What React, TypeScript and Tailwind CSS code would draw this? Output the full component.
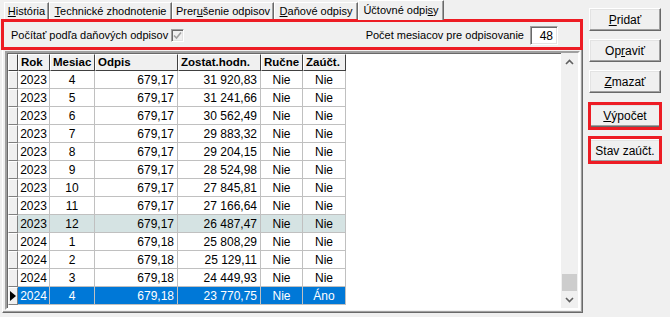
import React from "react";

const rows: string[][] = [
  ["2023", "4", "679,17", "31 920,83", "Nie", "Nie"],
  ["2023", "5", "679,17", "31 241,66", "Nie", "Nie"],
  ["2023", "6", "679,17", "30 562,49", "Nie", "Nie"],
  ["2023", "7", "679,17", "29 883,32", "Nie", "Nie"],
  ["2023", "8", "679,17", "29 204,15", "Nie", "Nie"],
  ["2023", "9", "679,17", "28 524,98", "Nie", "Nie"],
  ["2023", "10", "679,17", "27 845,81", "Nie", "Nie"],
  ["2023", "11", "679,17", "27 166,64", "Nie", "Nie"],
  ["2023", "12", "679,17", "26 487,47", "Nie", "Nie"],
  ["2024", "1", "679,18", "25 808,29", "Nie", "Nie"],
  ["2024", "2", "679,18", "25 129,11", "Nie", "Nie"],
  ["2024", "3", "679,18", "24 449,93", "Nie", "Nie"],
  ["2024", "4", "679,18", "23 770,75", "Nie", "Áno"],
];

const cols = [
  { title: "Rok", w: "w-[32px]", align: "justify-center" },
  { title: "Mesiac", w: "w-[45px]", align: "justify-center" },
  { title: "Odpis", w: "w-[83px]", align: "justify-end pr-[3px]" },
  { title: "Zostat.hodn.", w: "w-[83px]", align: "justify-end pr-[3px]" },
  { title: "Ručne", w: "w-[42px]", align: "justify-center" },
  { title: "Zaúčt.", w: "w-[43px]", align: "justify-center" },
];

function Tab({ w, active, children }: { w: string; active?: boolean; children: React.ReactNode }) {
  if (active) {
    return (
      <div
        className={`${w} h-[20px] -mb-[1px] relative z-10 bg-[#f0f0f0] border-l border-t border-white border-r border-r-[#696969] shadow-[inset_-1px_0_#a0a0a0] flex items-center justify-center pb-[1px]`}
      >
        {children}
      </div>
    );
  }
  return (
    <div
      className={`${w} h-[17px] bg-[#f0f0f0] border-l border-t border-white border-r border-r-[#696969] shadow-[inset_-1px_0_#a0a0a0] flex items-center justify-center pt-[1px]`}
    >
      {children}
    </div>
  );
}

function Button({ mt, children }: { mt: string; children: React.ReactNode }) {
  return (
    <div
      className={`${mt} w-[72px] h-[23px] bg-[#f0f0f0] border border-t-white border-l-white border-r-[#696969] border-b-[#696969] shadow-[inset_-1px_-1px_#a0a0a0,inset_1px_1px_#e3e3e3] flex items-center justify-center text-[12px]`}
    >
      {children}
    </div>
  );
}

function Chevron({ down }: { down?: boolean }) {
  return (
    <svg width="9" height="6" viewBox="0 0 9 6">
      <path
        d={down ? "M1 1 L4.5 4.5 L8 1" : "M1 5 L4.5 1.5 L8 5"}
        fill="none"
        stroke="#606060"
        strokeWidth="1.6"
      />
    </svg>
  );
}

export default function App() {
  return (
    <div className="w-[670px] h-[317px] bg-[#f0f0f0] relative flex overflow-hidden whitespace-nowrap text-black text-[11px] leading-none font-['Liberation_Sans',Arial,sans-serif]">
      {/* left: tab control */}
      <div className="w-[584px] pl-[2px] flex flex-col">
        <div className="h-[19px] flex items-end pl-[2px]">
          <Tab w="w-[45px]">
            <span>
              <u>H</u>istória
            </span>
          </Tab>
          <Tab w="w-[123px]">
            <span>
              <u>T</u>echnické zhodnotenie
            </span>
          </Tab>
          <Tab w="w-[102px]">
            <span>
              Prer<u>u</u>šenie odpisov
            </span>
          </Tab>
          <Tab w="w-[84px]">
            <span>
              <u>D</u>aňové odpisy
            </span>
          </Tab>
          <Tab w="w-[86px]" active>
            <span>
              Účtovné odpi<u>s</u>y
            </span>
          </Tab>
        </div>

        <div className="w-[581px] h-[294px] border-l border-t border-white border-r border-b border-r-[#696969] border-b-[#696969] shadow-[inset_-1px_-1px_#a0a0a0] flex flex-col">
          {/* header options */}
          <div className="h-[31px] flex items-center pl-[8px] pr-[24px]">
            <span>Počítať podľa daňových odpisov</span>
            <div className="ml-[3px] w-[13px] h-[13px] border border-t-[#a0a0a0] border-l-[#a0a0a0] border-r-white border-b-white bg-[#f0f0f0] shadow-[inset_1px_1px_#696969,inset_-1px_-1px_#e3e3e3] flex items-center justify-center">
              <svg width="9" height="9" viewBox="0 0 9 9">
                <path d="M1 4.5 L3.5 7 L8 1.5" fill="none" stroke="#a0a0a0" strokeWidth="1.6" />
              </svg>
            </div>
            <div className="flex-1" />
            <span>Počet mesiacov pre odpisovanie</span>
            <div className="ml-[6px] w-[28px] h-[19px] bg-white border border-t-[#a0a0a0] border-l-[#a0a0a0] border-r-white border-b-white shadow-[inset_1px_1px_#696969,inset_-1px_-1px_#e3e3e3] flex items-center justify-end pr-[4px] text-[12px]">
              48
            </div>
          </div>

          {/* grid */}
          <div className="ml-[2px] w-[575px] h-[259px] border-2 border-t-[#a0a0a0] border-l-[#a0a0a0] border-r-white border-b-white flex bg-white">
            <div className="flex-1 flex flex-col border-t border-l border-[#696969]">
              {/* header row */}
              <div className="flex h-[17px]">
                <div className="w-[10px] h-full bg-[#f0f0f0] border-t border-l border-white border-r border-b border-r-[#404040] border-b-[#404040]" />
                {cols.map((c) => (
                  <div
                    key={c.title}
                    className={`${c.w} h-full bg-[#f0f0f0] border-t border-l border-white border-r border-b border-r-[#404040] border-b-[#404040] flex items-center pl-[2px] font-bold text-[11.5px] overflow-hidden`}
                  >
                    {c.title}
                  </div>
                ))}
              </div>
              {rows.map((r, i) => {
                const sel = i === rows.length - 1;
                const hl = i === 8;
                const bg = sel ? "bg-[#0078d7] text-white" : hl ? "bg-[#d5e3e3]" : "bg-white";
                return (
                  <div key={i} className="flex h-[18px]">
                    <div className="w-[10px] h-full bg-[#f0f0f0] border-t border-l border-white border-r border-b border-r-[#808080] border-b-[#808080] flex items-center justify-center">
                      {sel && (
                        <svg width="6" height="10" viewBox="0 0 6 10">
                          <path d="M0 0 L6 5 L0 10 Z" fill="#000" />
                        </svg>
                      )}
                    </div>
                    {r.map((v, j) => (
                      <div
                        key={j}
                        className={`${cols[j].w} h-full ${bg} border-r border-b border-[#c0c0c0] flex items-center ${cols[j].align} text-[12px]`}
                      >
                        {v}
                      </div>
                    ))}
                  </div>
                );
              })}
            </div>
            {/* scrollbar */}
            <div className="w-[17px] h-full bg-[#f0f0f0] flex flex-col">
              <div className="h-[17px] flex items-center justify-center">
                <Chevron />
              </div>
              <div className="flex-1 flex flex-col justify-end">
                <div className="h-[17px] mx-[1px] bg-[#cdcdcd]" />
              </div>
              <div className="h-[17px] flex items-center justify-center">
                <Chevron down />
              </div>
            </div>
          </div>
        </div>
      </div>

      {/* right: buttons */}
      <div className="ml-[5px] flex flex-col">
        <Button mt="mt-[8px]">
          <span>
            <u>P</u>ridať
          </span>
        </Button>
        <Button mt="mt-[8px]">
          <span>
            Op<u>r</u>aviť
          </span>
        </Button>
        <Button mt="mt-[8px]">
          <span>
            <u>Z</u>mazať
          </span>
        </Button>
        <Button mt="mt-[11px]">
          <span>
            <u>V</u>ýpočet
          </span>
        </Button>
        <Button mt="mt-[12px]">
          <span>Stav zaúčt.</span>
        </Button>
      </div>

      {/* red highlight annotations */}
      <div className="absolute left-[358px] top-0 w-[86px] h-[21px] border-[3px] border-[#ed1c24] pointer-events-none" />
      <div className="absolute left-[1px] top-[19px] w-[582px] h-[31px] border-[3px] border-[#ed1c24] pointer-events-none" />
      <div className="absolute left-[588px] top-[102px] w-[74px] h-[28px] border-[3px] border-[#ed1c24] pointer-events-none" />
      <div className="absolute left-[588px] top-[136px] w-[74px] h-[28px] border-[3px] border-[#ed1c24] pointer-events-none" />
    </div>
  );
}
